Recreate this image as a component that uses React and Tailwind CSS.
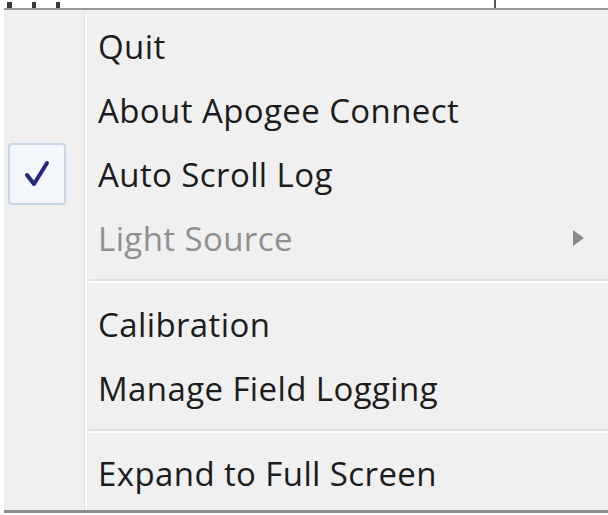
import React from 'react';

const Gutter = ({ children }) => (
  <div className="flex w-[83px] shrink-0 items-center self-stretch border-r-2 border-r-white">
    <div className="flex h-full w-[81px] items-center border-r border-r-[#e0e0e0] pl-[4px]">
      {children}
    </div>
  </div>
);

const Item = ({ label, checked, disabled, submenu }) => (
  <div className="flex h-[64px] items-center">
    <Gutter>
      {checked && (
        <div className="flex h-[62px] w-[58px] items-center justify-center rounded-[4px] border-2 border-[#c8d6e6] bg-[#f3f6fa]">
          <svg width="28" height="30" viewBox="0 0 28 30">
            <path d="M4 16 L11 25 L24 4" fill="none" stroke="#27277f" strokeWidth="4" strokeLinejoin="round" strokeLinecap="round" />
          </svg>
        </div>
      )}
    </Gutter>
    <span
      className={`flex-1 pl-[11px] text-[33px] leading-none tracking-[0.4px] ${disabled ? 'text-[#8f8f8f]' : 'text-[#1c1c1c]'}`}
      style={{ fontFamily: '"Open Sans", "Noto Sans", sans-serif' }}
    >
      {label}
    </span>
    {submenu && (
      <svg className="mr-[23px]" width="13" height="18" viewBox="0 0 13 18">
        <path d="M1 1 L12 9 L1 17 Z" fill={disabled ? '#8a8a8a' : '#333'} />
      </svg>
    )}
  </div>
);

const Separator = ({ h }) => (
  <div className={`flex items-center ${h}`}>
    <Gutter />
    <div className="flex flex-1 flex-col pl-[2px]">
      <div className="h-[2px] bg-[#e0e0e0]" />
      <div className="h-[2px] bg-white" />
    </div>
  </div>
);

export default function App() {
  return (
    <div className="h-[515px] w-[608px] overflow-hidden bg-white">
      {/* clipped bits of the window behind */}
      <div className="flex h-[8px] items-end">
        <div className="ml-[7px] h-[6px] w-[5px] bg-[#3a3a3a]" />
        <div className="ml-[20px] h-[6px] w-[4px] bg-[#3a3a3a]" />
        <div className="ml-[20px] h-[6px] w-[4px] bg-[#3a3a3a]" />
        <div className="ml-[434px] h-[8px] w-[2px] bg-[#555]" />
      </div>
      <div className="ml-[4px] flex h-[505px] flex-col border-t-2 border-b-[3px] border-t-[#9a9a9a] border-b-[#8c8c8c] bg-[#f0f0f0] pt-[4px]">
        <Item label="Quit" />
        <Item label="About Apogee Connect" />
        <Item label="Auto Scroll Log" checked />
        <Item label="Light Source" disabled submenu />
        <Separator h="h-[22px]" />
        <Item label="Calibration" />
        <Item label="Manage Field Logging" />
        <Separator h="h-[21px]" />
        <Item label="Expand to Full Screen" />
        <div className="flex flex-1">
          <Gutter />
        </div>
      </div>
    </div>
  );
}
